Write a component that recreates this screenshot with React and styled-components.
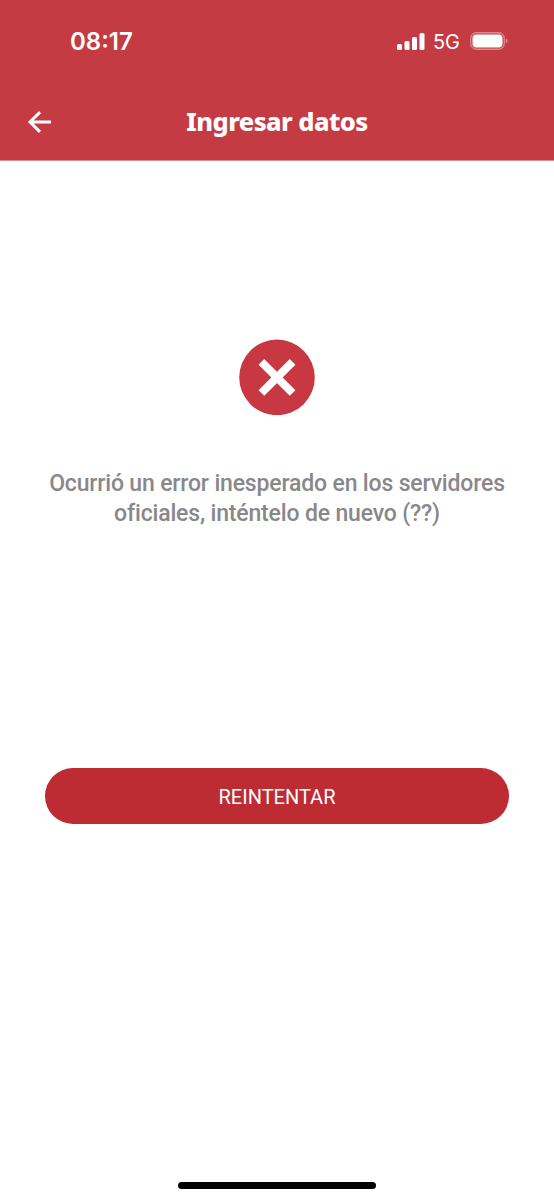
import React from 'react';
import styled, { createGlobalStyle } from 'styled-components';

const Global = createGlobalStyle`
  * { box-sizing: border-box; }
  body { margin: 0; background: #fff; }
`;
const Screen = styled.div`
  width: 554px; height: 1200px; display: flex; flex-direction: column; align-items: center;
  background: #fff; font-family: Roboto, sans-serif; overflow: hidden;
`;
const Header = styled.header`
  width: 100%; height: 161px; flex: none; background: #c53b43; color: #fff;
  border-bottom: 1px solid #dc8b90;
  display: flex; flex-direction: column;
`;
const StatusBar = styled.div`
  height: 82px; padding: 0 46px 0 70px; display: flex; align-items: center; justify-content: space-between;
`;
const Clock = styled.span`
  font: 600 24px/30px Inter, sans-serif; padding-top: 2px;
`;
const Indicators = styled.div`
  display: flex; align-items: center;
`;
const Network = styled.span`
  font: 400 20px/30px Inter, sans-serif; margin: 0 10px 0 8px; padding-top: 2px;
`;
const NavBar = styled.nav`
  height: 78px; display: grid; grid-template-columns: 80px 1fr 80px; align-items: center;
`;
const BackButton = styled.button`
  border: 0; padding: 2px 0 0 27px; background: none; color: inherit; display: flex;
`;
const Title = styled.h1`
  margin: 0; text-align: center; white-space: nowrap;
  font: 800 25.5px/36px "Noto Sans", sans-serif; letter-spacing: -0.55px;
`;
const ErrorIcon = styled.svg`
  display: block; margin-top: 178px; flex: none;
`;
const Message = styled.p`
  margin: 54px 0 0; text-align: center; color: #88888b; font-weight: 500; font-size: 23px; line-height: 30px;
  white-space: nowrap; font-variant-ligatures: none; letter-spacing: -0.165px;
`;
const RetryButton = styled.button`
  width: 464px; height: 56px; margin-top: 239px; border: 0; border-radius: 28px; flex: none;
  background: #bd2b33; color: #fff; font: 400 20px/24px Roboto, sans-serif; padding: 2px 0 0;
`;
const HomeIndicator = styled.div`
  width: 198px; height: 7px; border-radius: 4px; background: #000; margin: auto 0 11.5px;
`;

export default function App() {
  return (
    <Screen>
      <Global />
      <Header>
        <StatusBar>
          <Clock>08:17</Clock>
          <Indicators>
            <svg width="29" height="18" viewBox="0 0 29 18" fill="#fff">
              <rect x="1" y="12" width="5" height="6" rx="1.5" />
              <rect x="8.5" y="9" width="5" height="9" rx="1.5" />
              <rect x="16" y="5" width="5" height="13" rx="1.5" />
              <rect x="23.5" y="1" width="5" height="17" rx="1.5" />
            </svg>
            <Network>5G</Network>
            <svg width="38" height="18" viewBox="0 0 38 18">
              <rect x=".75" y=".75" width="33.5" height="16.5" rx="5.5" fill="none" stroke="#dc8a8f" strokeWidth="1.3" />
              <rect x="2.5" y="2.5" width="30" height="13" rx="3.9" fill="#fff" />
              <path d="M35.8 6.5c2.3.8 2.3 4.2 0 5z" fill="#dc8a8f" />
            </svg>
          </Indicators>
        </StatusBar>
        <NavBar>
          <BackButton aria-label="Volver">
            <svg width="25" height="24" viewBox="0 0 25 24" fill="none" stroke="#fff" strokeWidth="2.9">
              <path d="M24 12H4M13 2.1L3 12l10 9.9" />
            </svg>
          </BackButton>
          <Title>Ingresar datos</Title>
        </NavBar>
      </Header>
      <ErrorIcon width="76" height="76" viewBox="0 0 76 76">
        <circle cx="38" cy="38.4" r="37.8" fill="#c73842" />
        <path d="M22.4 22.8l31.2 31.2M53.6 22.8L22.4 54" stroke="#fff" strokeWidth="8" />
      </ErrorIcon>
      <Message>Ocurrió un error inesperado en los servidores<br />oficiales, inténtelo de nuevo (??)</Message>
      <RetryButton>REINTENTAR</RetryButton>
      <HomeIndicator />
    </Screen>
  );
}
